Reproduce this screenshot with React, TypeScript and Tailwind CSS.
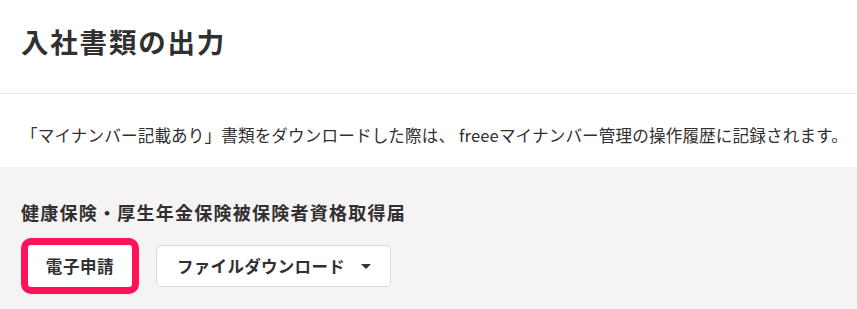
const font = {
  fontFamily: '"Noto Sans CJK JP", "Noto Sans", sans-serif',
}

function Caret() {
  return (
    <svg width="10" height="5" viewBox="0 0 10 5" className="fill-[#333]">
      <path d="M0 0h10L5 5z" />
    </svg>
  )
}

export default function App() {
  return (
    <div
      className="min-h-[309px] w-full overflow-hidden bg-white text-[#303030]"
      style={font}
    >
      <header className="flex h-[94px] items-start border-b border-[#e6e6e6] px-[21px] pt-[28px]">
        <h1 className="text-[27.5px] font-bold leading-none tracking-[1.8px]">
          入社書類の出力
        </h1>
      </header>

      <div className="px-[21px] pt-[29px] pb-[20px]">
        <p className="text-[16.6px] leading-6 tracking-[0.12px] whitespace-nowrap">
          「マイナンバー記載あり」書類をダウンロードした際は、 freeeマイナンバー管理の操作履歴に記録されます。
        </p>
      </div>

      <section className="bg-[#f5f3f3] px-[21px] pt-[32px] pb-[22px]">
        <h2 className="text-[18px] font-bold leading-[27px] tracking-[1.25px]">
          健康保険・厚生年金保険被保険者資格取得届
        </h2>
        <div className="mt-[19px] flex items-center gap-[24px]">
          <button className="ml-[7px] flex h-[42px] w-[104px] items-center justify-center rounded-[3px] bg-white text-[16.5px] font-bold tracking-[0.6px] outline-[7px] outline-[#fd1259] outline-solid">
            電子申請
          </button>
          <button className="flex h-[42px] w-[235px] items-center justify-between rounded-[5px] border border-[#dadada] bg-white pl-[20px] pr-[19px] text-[16.5px] font-bold tracking-[0.3px]">
            <span>ファイルダウンロード</span>
            <Caret />
          </button>
        </div>
      </section>
    </div>
  )
}
